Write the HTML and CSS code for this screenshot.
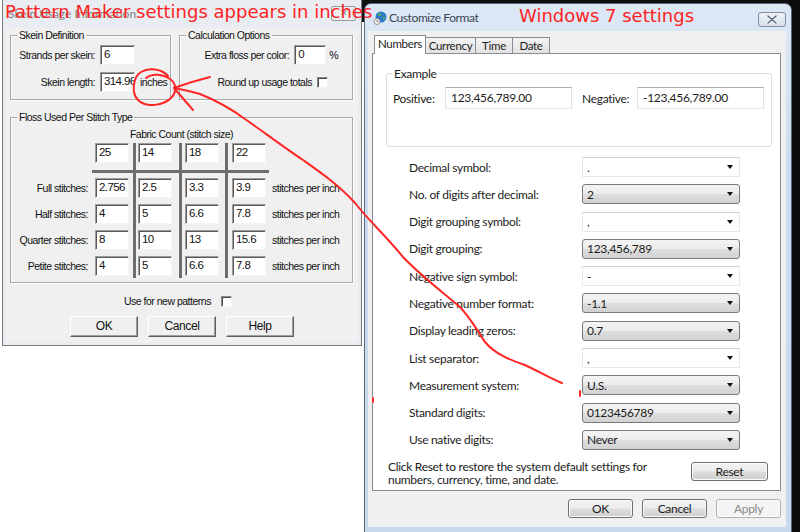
FILE: index.html
```html
<!DOCTYPE html>
<html lang="en">
<head>
    <meta charset="UTF-8">
    <title>Skein Usage / Customize Format</title>
    <link rel="stylesheet" href="styles.css">
</head>
<body>
<div class="desk">
    <div class="backdrop-top"></div>
    <div class="backdrop-right"></div>

    <!-- Pattern Maker dialog -->
    <div class="dlg-classic">
        <div class="cl-title">
            <span class="cl-title-text">Skein Usage Information</span>
            <span class="cl-close">&#x2715;</span>
        </div>
        <div class="cl-body">
            <div class="cl-top">
                <div class="grp grp-skein">
                    <span class="grp-title">Skein Definition</span>
                    <div class="skein-grid">
                        <span class="lbl">Strands per skein:</span><span class="tb">6</span><span></span>
                        <span class="lbl">Skein length:</span><span class="tb">314.96</span><span class="unit">inches</span>
                    </div>
                </div>
                <div class="grp grp-calc">
                    <span class="grp-title">Calculation Options</span>
                    <div class="calc-row first">
                        <span>Extra floss per color:</span><span class="tb tb-pct">0</span><span class="pct">%</span>
                    </div>
                    <div class="calc-row second">
                        <span>Round up usage totals</span><span class="chk"></span>
                    </div>
                </div>
            </div>

            <div class="grp grp-floss">
                <span class="grp-title">Floss Used Per Stitch Type</span>
                <div class="fabric-title">Fabric Count (stitch size)</div>
                <div class="floss-grid">
                    <span></span><span class="tb c1">25</span><span class="tb c2">14</span><span class="tb c3">18</span><span class="tb c4">22</span><span></span>
                    <span class="lbl">Full stitches:</span><span class="tb c1">2.756</span><span class="tb c2">2.5</span><span class="tb c3">3.3</span><span class="tb c4">3.9</span><span class="unit">stitches per inch</span>
                    <span class="lbl">Half stitches:</span><span class="tb c1">4</span><span class="tb c2">5</span><span class="tb c3">6.6</span><span class="tb c4">7.8</span><span class="unit">stitches per inch</span>
                    <span class="lbl">Quarter stitches:</span><span class="tb c1">8</span><span class="tb c2">10</span><span class="tb c3">13</span><span class="tb c4">15.6</span><span class="unit">stitches per inch</span>
                    <span class="lbl">Petite stitches:</span><span class="tb c1">4</span><span class="tb c2">5</span><span class="tb c3">6.6</span><span class="tb c4">7.8</span><span class="unit">stitches per inch</span>
                </div>
            </div>

            <div class="new-row">
                <span>Use for new patterns</span><span class="chk"></span>
            </div>

            <div class="cl-buttons">
                <span class="cl-btn">OK</span>
                <span class="cl-btn">Cancel</span>
                <span class="cl-btn">Help</span>
            </div>
        </div>
    </div>

    <!-- Windows 7 dialog -->
    <div class="dlg-aero">
        <div class="ae-title">
            <svg class="globe" width="14" height="14" viewBox="0 0 14 14">
                <circle cx="8" cy="6" r="5.5" fill="#2a7bd0"/>
                <path d="M5 2.5 q2.5 -1 3.5 1 q-0.5 2 -2.5 1.5 q-1 1 -1 -2.5z M9.5 5.5 q2 0 3 1.5 q-1 2 -2.5 1 z" fill="#56b04c"/>
                <circle cx="4" cy="10.5" r="3" fill="#f2f2f2" stroke="#7d7d7d" stroke-width="0.8"/>
                <path d="M4 9 v1.6 h1.2" stroke="#555" stroke-width="0.7" fill="none"/>
            </svg>
            <span class="ae-title-text">Customize Format</span>
            <span class="ae-close">
                <svg width="12" height="9" viewBox="0 0 12 9">
                    <path d="M2 1 L10 8 M10 1 L2 8" stroke="#f4f6f8" stroke-width="3.4" stroke-linecap="round"/>
                    <path d="M2 1 L10 8 M10 1 L2 8" stroke="#5c6b7d" stroke-width="1.6" stroke-linecap="round"/>
                </svg>
            </span>
        </div>
        <div class="ae-client">
            <div class="tabs">
                <span class="tab active">Numbers</span>
                <span class="tab w-cur">Currency</span>
                <span class="tab w-time">Time</span>
                <span class="tab w-date">Date</span>
            </div>
            <div class="panel">
                <div class="ex-group">
                    <span class="ex-title">Example</span>
                    <div class="ex-row">
                        <span class="ex-lbl">Positive:</span><span class="ae-tb">123,456,789.00</span>
                        <span class="ex-lbl neg">Negative:</span><span class="ae-tb">-123,456,789.00</span>
                    </div>
                </div>

                <div class="fmt-rows">
                    <span>Decimal symbol:</span><span class="dd edit">.<i class="arr"></i></span>
                    <span>No. of digits after decimal:</span><span class="dd list">2<i class="arr"></i></span>
                    <span>Digit grouping symbol:</span><span class="dd edit">,<i class="arr"></i></span>
                    <span>Digit grouping:</span><span class="dd list">123,456,789<i class="arr"></i></span>
                    <span>Negative sign symbol:</span><span class="dd edit">-<i class="arr"></i></span>
                    <span>Negative number format:</span><span class="dd list">-1.1<i class="arr"></i></span>
                    <span>Display leading zeros:</span><span class="dd list">0.7<i class="arr"></i></span>
                    <span>List separator:</span><span class="dd edit">,<i class="arr"></i></span>
                    <span>Measurement system:</span><span class="dd list">U.S.<i class="arr"></i></span>
                    <span>Standard digits:</span><span class="dd list">0123456789<i class="arr"></i></span>
                    <span>Use native digits:</span><span class="dd list">Never<i class="arr"></i></span>
                </div>

                <div class="reset-row">
                    <p class="reset-note">Click Reset to restore the system default settings for<br>numbers, currency, time, and date.</p>
                    <span class="ae-btn reset">Reset</span>
                </div>
            </div>
            <div class="ae-footer">
                <span class="ae-btn">OK</span>
                <span class="ae-btn">Cancel</span>
                <span class="ae-btn disabled">Apply</span>
            </div>
        </div>
    </div>

    <!-- red hand-drawn notes -->
    <svg class="scribble" width="800" height="532" viewBox="0 0 800 532">
        <path d="M168 76 C162 69 149 67 141 72 C133 77 131 93 138 100 C146 108 164 106 172 97 C177 91 176 83 170 79 C163 74 152 73 146 78"/>
        <path d="M210 77 C198 80 185 84 174 88 C180 95 186 102 193 110"/>
        <path d="M174 88 C185 90 193 92 200 94 C215 100 230 108 245 119 C265 133 285 148 303 160 C320 172 340 186 355 203 C370 222 386 236 403 257 C420 275 440 290 460 307 C472 320 478 332 485 342 C495 354 510 360 525 365 C540 372 550 378 562 383"/>
        <path d="M580 391 L580 396"/>
        <path d="M373 398 L373 402"/>
    </svg>
    <span class="note note-left">Pattern Maker settings appears in inches</span>
    <span class="note note-right">Windows 7 settings</span>
</div>
</body>
</html>
```

FILE: styles.css
```css
* {
    box-sizing: border-box;
}
body {
    margin: 0;
    width: 800px;
    height: 532px;
    overflow: hidden;
    background-color: #fff;
    font-family: "Liberation Sans", Arial, sans-serif;
}
.desk {
    position: relative;
    width: 800px;
    height: 532px;
    overflow: hidden;
}
.backdrop-top {
    position: absolute;
    left: 330px;
    top: 0;
    width: 470px;
    height: 22px;
    background-color: #101010;
}
.backdrop-right {
    position: absolute;
    right: 0;
    top: 0;
    width: 12px;
    height: 532px;
    background-color: #0b0b0b;
}

/* ---------- classic dialog ---------- */
.dlg-classic {
    position: absolute;
    left: 2px;
    top: -3px;
    width: 360px;
    height: 349px;
    border: 1px solid #7a7a7a;
    background-color: #e9edf1;
    font-family: "Liberation Sans", Arial, sans-serif;
    font-size: 10.5px;
    letter-spacing: -0.5px;
    color: #111;
    white-space: nowrap;
}
.cl-title {
    height: 30px;
    display: flex;
    align-items: center;
    padding: 0 5px 0 5px;
}
.cl-title-text {
    font-family: Lato, sans-serif;
    font-size: 12px;
    letter-spacing: 0;
    color: #808080;
}
.cl-close {
    margin-left: auto;
    width: 25px;
    height: 15px;
    border: 1px solid #9a9a9a;
    border-radius: 2px;
    font-size: 9px;
    letter-spacing: 0;
    line-height: 13px;
    text-align: center;
    color: #777;
    background-color: #eceef0;
}
.cl-body {
    margin: 0 3px;
    height: 314px;
    background-color: #f0f0f0;
    padding: 7px 0 0 4px;
}
.cl-top {
    display: flex;
    gap: 8px;
}
.grp {
    border: 1px solid #a9a9a9;
    box-shadow: inset 1px 1px 0 #fff, 1px 1px 0 #fff;
}
.grp-title {
    display: block;
    width: max-content;
    margin: -7px 0 0 6px;
    padding: 0 2px;
    line-height: 13px;
    height: 13px;
    background-color: #f0f0f0;
}
.grp-skein {
    width: 161px;
    height: 65px;
}
.grp-calc {
    width: 174px;
    height: 65px;
}
.tb {
    display: block;
    height: 20px;
    background-color: #fff;
    border: 1px solid;
    border-color: #9c9c9c #f4f4f4 #f4f4f4 #9c9c9c;
    box-shadow: inset 1px 1px 0 #5a5a5a;
    padding: 1px 0 0 3px;
    line-height: 14px;
    font-size: 11.5px;
    letter-spacing: -0.6px;
    overflow: hidden;
}
.lbl {
    text-align: right;
    line-height: 20px;
}
.unit {
    line-height: 20px;
}
.skein-grid {
    display: grid;
    grid-template-columns: 84px 35px auto;
    grid-auto-rows: 20px;
    column-gap: 5px;
    row-gap: 7px;
    margin-top: 3px;
}
.calc-row {
    display: flex;
    justify-content: flex-end;
    align-items: center;
    height: 20px;
    gap: 5px;
}
.calc-row.first {
    margin-top: 3px;
    padding-right: 14px;
}
.calc-row.second {
    margin-top: 7px;
    padding-right: 24px;
}
.tb-pct {
    width: 32px;
}
.pct {
    margin-left: -2px;
}
.chk {
    display: block;
    width: 11px;
    height: 11px;
    background-color: #fff;
    border: 1px solid;
    border-color: #8a8a8a #f4f4f4 #f4f4f4 #8a8a8a;
    box-shadow: inset 1px 1px 0 #4a4a4a;
}
.grp-floss {
    width: 343px;
    height: 166px;
    margin-top: 17px;
}
.fabric-title {
    margin-top: 4px;
    height: 13px;
    line-height: 13px;
    text-align: center;
}
.floss-grid {
    display: grid;
    grid-template-columns: 77px 46px 46px 46px 46px auto;
    grid-template-rows: 35px 26px 26px 26px 26px;
    align-items: start;
    margin-top: 2px;
    background:
        linear-gradient(#6d6d6d, #6d6d6d) 122px 0 / 3px 135px no-repeat,
        linear-gradient(#6d6d6d, #6d6d6d) 168px 0 / 3px 135px no-repeat,
        linear-gradient(#6d6d6d, #6d6d6d) 214px 0 / 3px 135px no-repeat,
        linear-gradient(#6d6d6d, #6d6d6d) 81px 27px / 177px 3px no-repeat;
}
.floss-grid .tb {
    width: 34px;
}
.floss-grid .c1 { margin-left: 7px; }
.floss-grid .c2 { margin-left: 4px; }
.floss-grid .c3 { margin-left: 5px; }
.floss-grid .c4 { margin-left: 6px; }
.new-row {
    display: flex;
    align-items: center;
    gap: 10px;
    height: 14px;
    margin-top: 11px;
    padding-left: 114px;
}
.cl-buttons {
    display: flex;
    gap: 10px;
    margin-top: 8px;
    padding-left: 60px;
}
.cl-btn {
    display: block;
    width: 68px;
    height: 21px;
    line-height: 19px;
    text-align: center;
    font-size: 12px;
    letter-spacing: -0.4px;
    background-color: #f0f0f0;
    border: 1px solid;
    border-color: #fff #5e5e5e #5e5e5e #fff;
    box-shadow: inset -1px -1px 0 #a0a0a0;
}

/* ---------- windows 7 dialog ---------- */
.dlg-aero {
    position: absolute;
    left: 364px;
    top: 3px;
    width: 428px;
    height: 540px;
    border: 1px solid #58687c;
    border-radius: 7px 7px 0 0;
    background: linear-gradient(#dce8f5, #cddcee 30%, #c8d9ec);
    font-family: Lato, "Open Sans", sans-serif;
    font-size: 12px;
    letter-spacing: -0.3px;
    color: #1c1c1c;
}
.ae-title {
    height: 27px;
    display: flex;
    align-items: center;
    padding: 0 5px 0 8px;
}
.globe {
    margin-top: 1px;
}
.ae-title-text {
    margin-left: 2px;
    color: #3a4656;
    letter-spacing: -0.4px;
}
.ae-close {
    margin-left: auto;
    margin-top: 3px;
    width: 28px;
    height: 15px;
    display: flex;
    align-items: center;
    justify-content: center;
    border: 1px solid #7f8ea3;
    border-radius: 3px;
    background: linear-gradient(#eef2f7, #d6dfea);
}
.ae-client {
    margin: 0 5px 0 3px;
    height: 496px;
    background-color: #f0f0f0;
    padding: 4px 5px 0 4px;
}
.tabs {
    display: flex;
    align-items: flex-end;
    height: 18px;
    padding-left: 2px;
}
.tab {
    display: block;
    height: 16px;
    line-height: 15px;
    text-align: center;
    border: 1px solid #898c95;
    border-bottom: none;
    border-left: none;
    background: linear-gradient(#f3f3f3, #e2e2e2);
    font-size: 11.5px;
}
.tab.active {
    position: relative;
    z-index: 1;
    width: 52px;
    height: 19px;
    margin-bottom: -1px;
    border-left: 1px solid #898c95;
    background: #fff;
}
.tab.w-cur { width: 50px; }
.tab.w-time { width: 37px; }
.tab.w-date { width: 37px; }
.panel {
    height: 438px;
    border: 1px solid #898c95;
    background-color: #fff;
}
.ex-group {
    height: 74px;
    margin: 19px 8px 0 13px;
    border: 1px solid #d5dfe5;
    border-radius: 3px;
}
.ex-title {
    display: block;
    width: max-content;
    margin: -8px 0 0 5px;
    padding: 0 2px;
    line-height: 15px;
    background-color: #fff;
}
.ex-row {
    display: flex;
    align-items: center;
    margin-top: 6px;
    padding-left: 6px;
}
.ex-lbl {
    width: 52px;
}
.ex-lbl.neg {
    width: 55px;
    margin-left: 10px;
}
.ae-tb {
    display: block;
    width: 127px;
    height: 22px;
    line-height: 20px;
    padding-left: 5px;
    border: 1px solid;
    border-color: #abadb3 #dbdfe6 #e3e9ef #e2e3ea;
}
.fmt-rows {
    display: grid;
    grid-template-columns: 173px 158px;
    grid-auto-rows: 20px;
    row-gap: 7.3px;
    align-items: center;
    margin-top: 10px;
    padding-left: 36px;
}
.dd {
    display: flex;
    align-items: center;
    height: 20px;
    padding-left: 4px;
}
.dd.edit {
    background-color: #fff;
    border: 1px solid;
    border-color: #cfd2d6 #e6e8eb #e6e8eb #e6e8eb;
}
.dd.list {
    border: 1px solid #7a7a7a;
    border-radius: 3px;
    background: linear-gradient(#f4f4f4 0%, #ececec 48%, #dedede 52%, #d2d2d2 100%);
}
.arr {
    margin-left: auto;
    margin-right: 6px;
    width: 0;
    height: 0;
    border-left: 3.5px solid transparent;
    border-right: 3.5px solid transparent;
    border-top: 4px solid #111;
}
.reset-row {
    display: flex;
    align-items: flex-start;
    margin-top: 10px;
    padding: 0 12px 0 15px;
}
.reset-note {
    margin: 0;
    line-height: 13.5px;
}
.ae-btn {
    display: block;
    width: 65px;
    height: 19px;
    line-height: 17px;
    text-align: center;
    border: 1px solid #707070;
    border-radius: 3px;
    background: linear-gradient(#f3f3f3 0%, #ebebeb 48%, #dddddd 52%, #cfcfcf 100%);
    box-shadow: inset 0 0 0 1px #fbfbfb;
}
.ae-btn.reset {
    width: 77px;
    margin-left: auto;
    margin-top: 2px;
}
.ae-btn.disabled {
    border-color: #adb2b5;
    background: #f4f4f4;
    color: #8b8b8b;
}
.ae-footer {
    display: flex;
    justify-content: flex-end;
    gap: 9px;
    margin-top: 8px;
}

/* ---------- annotations ---------- */
.scribble {
    position: absolute;
    left: 0;
    top: 0;
    z-index: 5;
    pointer-events: none;
    fill: none;
    stroke: #ff2626;
    stroke-width: 2;
    stroke-linecap: round;
    stroke-linejoin: round;
}
.note {
    position: absolute;
    z-index: 6;
    font-family: "DejaVu Sans", sans-serif;
    font-size: 18px;
    line-height: 18px;
    color: #ff1f1f;
    white-space: nowrap;
}
.note-left {
    left: 5px;
    top: 3px;
}
.note-right {
    left: 519px;
    top: 7px;
}
```
